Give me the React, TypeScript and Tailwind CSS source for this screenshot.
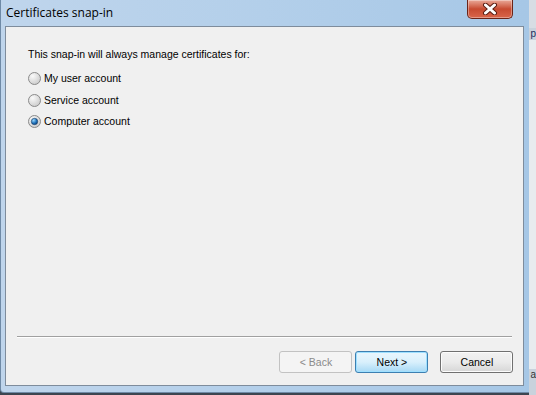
import React from "react";

function Radio({ checked }: { checked?: boolean }) {
  return (
    <svg width="13" height="13" viewBox="0 0 13 13" className="shrink-0">
      <defs>
        <radialGradient id={checked ? "rg1" : "rg0"} cx="0.35" cy="0.3" r="0.8">
          <stop offset="0" stopColor="#fafafa" />
          <stop offset="1" stopColor="#c8c8c8" />
        </radialGradient>
        <radialGradient id="dot" cx="0.35" cy="0.3" r="0.8">
          <stop offset="0" stopColor="#9ad8ff" />
          <stop offset="0.6" stopColor="#1c6fb8" />
          <stop offset="1" stopColor="#0b3c77" />
        </radialGradient>
      </defs>
      <circle cx="6.5" cy="6.5" r="6" fill={`url(#${checked ? "rg1" : "rg0"})`} stroke="#8a8a8a" strokeWidth="1" />
      {checked && <circle cx="6.5" cy="6.5" r="3.2" fill="url(#dot)" stroke="#1d3d63" strokeWidth="0.6" />}
    </svg>
  );
}

export default function App() {
  const body = { fontFamily: '"Liberation Sans", Arial, sans-serif' };
  return (
    <div className="w-[536px] h-[395px] flex bg-[#3d4550] overflow-hidden">
      <div className="w-[531px] h-[393px] flex flex-col rounded-bl-[4px] border-l border-b border-[#6f8aa6] bg-gradient-to-r from-[#bfd5ec] via-[#b3cfea] to-[#a6c7e6]">
        {/* title bar */}
        <div className="h-[26px] flex items-start shrink-0 relative">
          <div
            className="pl-[5px] pt-[5px] text-[12px] leading-[16px] text-black"
            style={{ fontFamily: '"Open Sans", "Noto Sans", sans-serif' }}
          >
            Certificates snap-in
          </div>
          <div className="absolute left-[466px] top-0 w-[46px] h-[19px] rounded-b-[5px] border border-t-0 border-[#6b2418] bg-gradient-to-b from-[#e9a898] via-[#c74a30] to-[#d9654a] flex items-center justify-center shadow-[inset_0_0_0_1px_rgba(255,255,255,0.35)]">
            <svg width="16" height="12" viewBox="0 0 16 12">
              <path d="M3.5 2 L12.5 10 M12.5 2 L3.5 10" stroke="#5a1c12" strokeWidth="5" strokeLinecap="round" />
              <path d="M3.5 2 L12.5 10 M12.5 2 L3.5 10" stroke="#ffffff" strokeWidth="3" strokeLinecap="round" />
            </svg>
          </div>
        </div>
        {/* content panel */}
        <div
          className="ml-[4px] mr-[5px] mb-[6px] flex-1 flex flex-col border border-[#7e8c9c] bg-[#f0f0f0] text-[10.5px] leading-[13px] text-black"
          style={body}
        >
          <div className="pl-[22px] pt-[21px] flex flex-col">
            <div>This snap-in will always manage certificates for:</div>
            <div className="mt-[11px] flex flex-col gap-[8.5px]">
              <label className="flex items-center gap-[3px]">
                <Radio />
                <span>My user account</span>
              </label>
              <label className="flex items-center gap-[3px]">
                <Radio />
                <span>Service account</span>
              </label>
              <label className="flex items-center gap-[3px]">
                <Radio checked />
                <span>Computer account</span>
              </label>
            </div>
          </div>
          <div className="flex-1" />
          <div className="mx-[11px] h-[2px] border-t border-[#a0a0a0] border-b border-b-white" />
          <div className="flex justify-end mt-[13px] mb-[12px] mr-[10px]">
            <button className="w-[73px] h-[22px] rounded-[3px] border border-[#c2c2c2] bg-[#f4f4f4] text-[#8a8a8a]">
              &lt; Back
            </button>
            <button className="ml-[3px] w-[73px] h-[22px] rounded-[3px] border border-[#3c7fb1] bg-gradient-to-b from-[#eaf6fd] via-[#d9f0fc] to-[#a7d9f5] shadow-[inset_0_0_0_1px_#9fe0ff]">
              Next &gt;
            </button>
            <button className="ml-[12px] w-[73px] h-[22px] rounded-[3px] border border-[#707070] bg-gradient-to-b from-[#f2f2f2] via-[#ebebeb] to-[#d6d6d6] shadow-[inset_0_0_0_1px_#fcfcfc]">
              Cancel
            </button>
          </div>
        </div>
      </div>
      <div className="flex-1 flex flex-col bg-[#c9d2dc]">
        <div className="h-[28px] bg-[#d7dde4]" />
        <div className="text-[10px] leading-[12px] text-[#1a2a5a] pl-[1px]" style={body}>p</div>
        <div className="flex-1 bg-[#e8ecef]" />
        <div className="text-[10px] leading-[12px] text-[#333] pl-[1px] mb-[14px]" style={body}>a</div>
      </div>
    </div>
  );
}
